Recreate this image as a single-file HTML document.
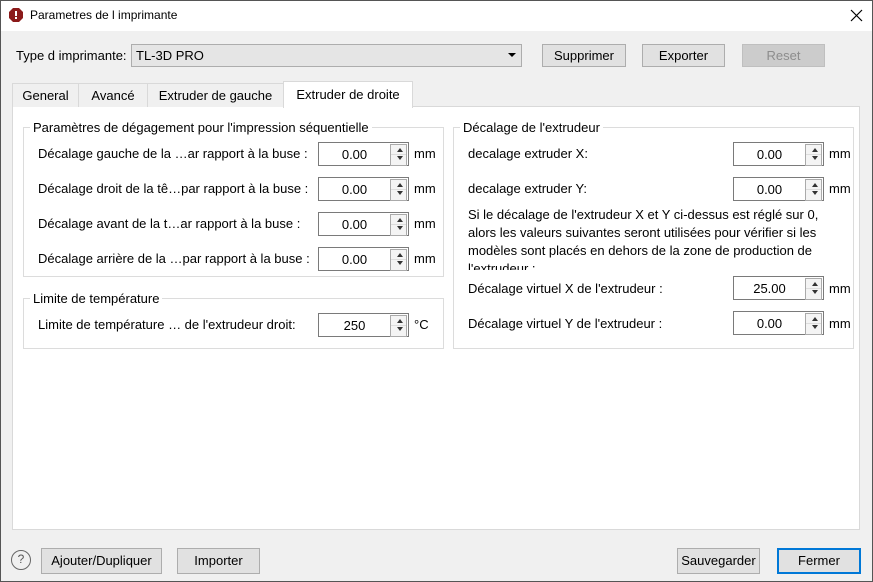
<!DOCTYPE html>
<html><head><meta charset="utf-8"><style>
*{box-sizing:border-box;margin:0;padding:0}
body{width:873px;height:582px;overflow:hidden;background:#f0f0f0;font-family:"Liberation Sans",sans-serif;font-size:13px;color:#000;position:relative}
.a{position:absolute;white-space:nowrap}
.frame{position:absolute;left:0;top:0;width:873px;height:582px;border:1px solid #555;pointer-events:none}
.title{position:absolute;left:0;top:0;width:873px;height:31px;background:#fff}
.btn{position:absolute;height:23px;background:#e1e1e1;border:1px solid #adadad;text-align:center;line-height:21px}
.tab{position:absolute;top:83px;height:24px;background:#f0f0f0;border:1px solid #d9d9d9;border-bottom:none;text-align:center;line-height:23px}
.grp{position:absolute;border:1px solid #dcdcdc}
.gt{position:absolute;top:-8px;left:6px;background:#fff;padding:0 3px;line-height:15px}
.sp{position:absolute;width:91px;height:24px;border:1px solid #7a7a7a;background:#fff;text-align:center;line-height:24px;padding-right:18px}
.sp:after{content:"";position:absolute;right:1px;top:1px;width:15px;height:20px;border:1px solid #aaa;background:linear-gradient(#ddd,#ddd) 0 9px/100% 1px no-repeat,#f4f4f4}
.sp i{position:absolute;right:5px;width:0;height:0;border-left:3px solid transparent;border-right:3px solid transparent;z-index:2}
.sp i.u{top:5px;border-bottom:4px solid #333}
.sp i.d{top:13px;border-top:4px solid #333}
</style></head><body>
<div class="title"></div>
<svg class="a" style="left:8px;top:7px" width="16" height="16" viewBox="0 0 16 16"><polygon points="5,1 11,1 15,5 15,11 11,15 5,15 1,11 1,5" fill="#8b1a1a"/><rect x="7" y="4" width="2" height="5" fill="#fff"/><rect x="7" y="10" width="2" height="2" fill="#fff"/></svg>
<div class="a" style="left:30px;top:8px;font-size:12px">Parametres de l imprimante</div>
<svg class="a" style="left:850px;top:9px" width="13" height="13" viewBox="0 0 13 13"><path d="M1 1L12 12M12 1L1 12" stroke="#000" stroke-width="1.2"/></svg>

<div class="a" style="left:16px;top:48px">Type d imprimante:</div>
<div class="a" style="left:131px;top:44px;width:391px;height:23px;border:1px solid #adadad;background:#e5e5e5;padding-left:4px;line-height:21px">TL-3D PRO</div>
<div class="a" style="left:508px;top:53px;border-left:4px solid transparent;border-right:4px solid transparent;border-top:4px solid #000"></div>
<div class="btn" style="left:542px;top:44px;width:84px">Supprimer</div>
<div class="btn" style="left:642px;top:44px;width:83px">Exporter</div>
<div class="btn" style="left:742px;top:44px;width:83px;background:#cccccc;border-color:#bfbfbf;color:#8d8d8d">Reset</div>

<div class="a" style="left:12px;top:106px;width:848px;height:424px;background:#fff;border:1px solid #d9d9d9"></div>
<div class="tab" style="left:12px;width:67px">General</div>
<div class="tab" style="left:78px;width:70px">Avancé</div>
<div class="tab" style="left:147px;width:137px">Extruder de gauche</div>
<div class="tab" style="left:283px;top:81px;height:27px;width:130px;background:#fff;line-height:25px">Extruder de droite</div>

<div class="grp" style="left:23px;top:127px;width:421px;height:150px"><div class="gt">Paramètres de dégagement pour l'impression séquentielle</div></div>
<div class="a" style="left:38px;top:146px">Décalage gauche de la …ar rapport à la buse :</div>
<div class="a" style="left:38px;top:181px">Décalage droit de la tê…par rapport à la buse :</div>
<div class="a" style="left:38px;top:216px">Décalage avant de la t…ar rapport à la buse :</div>
<div class="a" style="left:38px;top:251px">Décalage arrière de la …par rapport à la buse :</div>
<div class="sp" style="left:318px;top:142px">0.00<i class="u"></i><i class="d"></i></div>
<div class="sp" style="left:318px;top:177px">0.00<i class="u"></i><i class="d"></i></div>
<div class="sp" style="left:318px;top:212px">0.00<i class="u"></i><i class="d"></i></div>
<div class="sp" style="left:318px;top:247px">0.00<i class="u"></i><i class="d"></i></div>
<div class="a" style="left:414px;top:146px">mm</div>
<div class="a" style="left:414px;top:181px">mm</div>
<div class="a" style="left:414px;top:216px">mm</div>
<div class="a" style="left:414px;top:251px">mm</div>

<div class="grp" style="left:23px;top:298px;width:421px;height:51px"><div class="gt">Limite de température</div></div>
<div class="a" style="left:38px;top:317px">Limite de température … de l'extrudeur droit:</div>
<div class="sp" style="left:318px;top:313px">250<i class="u"></i><i class="d"></i></div>
<div class="a" style="left:414px;top:317px">°C</div>

<div class="grp" style="left:453px;top:127px;width:401px;height:222px"><div class="gt">Décalage de l'extrudeur</div></div>
<div class="a" style="left:468px;top:146px">decalage extruder X:</div>
<div class="a" style="left:468px;top:181px">decalage extruder Y:</div>
<div class="a" style="left:468px;top:206px;line-height:18px;width:370px;height:64px;overflow:hidden;white-space:normal">Si le décalage de l'extrudeur X et Y ci-dessus est réglé sur 0, alors les valeurs suivantes seront utilisées pour vérifier si les modèles sont placés en dehors de la zone de production de l'extrudeur :</div>
<div class="a" style="left:468px;top:281px">Décalage virtuel X de l'extrudeur :</div>
<div class="a" style="left:468px;top:316px">Décalage virtuel Y de l'extrudeur :</div>
<div class="sp" style="left:733px;top:142px">0.00<i class="u"></i><i class="d"></i></div>
<div class="sp" style="left:733px;top:177px">0.00<i class="u"></i><i class="d"></i></div>
<div class="sp" style="left:733px;top:276px">25.00<i class="u"></i><i class="d"></i></div>
<div class="sp" style="left:733px;top:311px">0.00<i class="u"></i><i class="d"></i></div>
<div class="a" style="left:829px;top:146px">mm</div>
<div class="a" style="left:829px;top:181px">mm</div>
<div class="a" style="left:829px;top:281px">mm</div>
<div class="a" style="left:829px;top:316px">mm</div>

<div class="a" style="left:11px;top:550px;width:20px;height:20px;border:1.5px solid #666;border-radius:50%;text-align:center;line-height:17px;font-size:12px;color:#555">?</div>
<div class="btn" style="left:41px;top:548px;width:121px;height:26px;line-height:24px">Ajouter/Dupliquer</div>
<div class="btn" style="left:177px;top:548px;width:83px;height:26px;line-height:24px">Importer</div>
<div class="btn" style="left:677px;top:548px;width:83px;height:26px;line-height:24px">Sauvegarder</div>
<div class="btn" style="left:777px;top:548px;width:84px;height:26px;line-height:22px;border:2px solid #0078d7">Fermer</div>
<div class="frame"></div>
</body></html>
